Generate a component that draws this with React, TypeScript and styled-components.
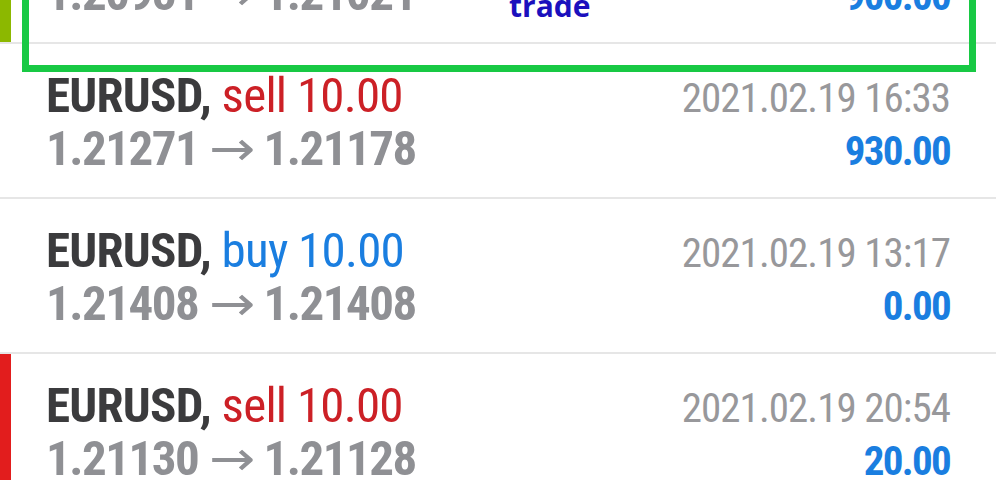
import React from 'react';
import styled, { createGlobalStyle } from 'styled-components';

const GlobalStyle = createGlobalStyle`
  html, body {
    margin: 0;
    padding: 0;
    background: #ffffff;
  }
  body {
    width: 996px;
    height: 480px;
    overflow: hidden;
    font-family: "Roboto Condensed", Roboto, "Liberation Sans", sans-serif;
  }
`;

type Deal = {
  symbol: string;
  side: 'buy' | 'sell';
  volume: string;
  open: string;
  close: string;
  time: string;
  profit: string;
  marker?: string;
};

const deals: Deal[] = [
  { symbol: 'EURUSD', side: 'buy', volume: '10.00', open: '1.20951', close: '1.21021', time: '2021.02.19 11:02', profit: '900.00', marker: '#8cb800' },
  { symbol: 'EURUSD', side: 'sell', volume: '10.00', open: '1.21271', close: '1.21178', time: '2021.02.19 16:33', profit: '930.00' },
  { symbol: 'EURUSD', side: 'buy', volume: '10.00', open: '1.21408', close: '1.21408', time: '2021.02.19 13:17', profit: '0.00' },
  { symbol: 'EURUSD', side: 'sell', volume: '10.00', open: '1.21130', close: '1.21128', time: '2021.02.19 20:54', profit: '20.00', marker: '#e21d1d' },
];

const Screen = styled.div`
  position: relative;
  width: 996px;
  height: 480px;
  overflow: hidden;
`;

const List = styled.div`
  display: flex;
  flex-direction: column;
  margin-top: -111px;
`;

const Row = styled.div<{ $marker?: string }>`
  display: grid;
  grid-template-columns: 1fr auto;
  grid-template-rows: 52px 52px;
  align-items: baseline;
  padding: 26px 46px 23px 46px;
  border-bottom: 2px solid #e6e6e6;
  box-shadow: ${p => (p.$marker ? `inset 11px 0 0 ${p.$marker}` : 'none')};
`;

const Title = styled.div`
  font-size: 49px;
  line-height: 52px;
  letter-spacing: -0.75px;
  white-space: nowrap;
`;

const Symbol = styled.span`
  font-weight: 700;
  color: #3b3b3d;
`;

const Side = styled.span<{ $side: 'buy' | 'sell' }>`
  color: ${p => (p.$side === 'sell' ? '#cc2026' : '#1a7ee0')};
`;

const Prices = styled.div`
  display: flex;
  align-items: baseline;
  font-size: 49px;
  line-height: 52px;
  font-weight: 700;
  letter-spacing: -1.5px;
  color: #8f9094;
  white-space: nowrap;
`;

const Arrow = styled.span`
  display: inline-block;
  font-family: "DejaVu Sans", sans-serif;
  font-size: 48px;
  line-height: 52px;
  font-weight: 400;
  letter-spacing: 0;
  margin: 0 11px 0 14px;
  transform: scaleX(1.15);
`;

const Time = styled.div`
  font-size: 41px;
  line-height: 44px;
  letter-spacing: -0.95px;
  color: #98989b;
  text-align: right;
  white-space: nowrap;
`;

const Profit = styled.div`
  font-size: 41px;
  line-height: 44px;
  font-weight: 700;
  letter-spacing: -1.7px;
  color: #1a7ee0;
  text-align: right;
`;

const Highlight = styled.div`
  position: absolute;
  left: 22px;
  top: -20px;
  width: 940px;
  height: 78px;
  border: 7px solid #18c944;
`;

const Label = styled.div`
  position: absolute;
  left: 509px;
  top: -13px;
  font-family: "Open Sans", "DejaVu Sans", sans-serif;
  font-size: 30px;
  font-weight: 700;
  line-height: 38px;
  color: #1b10bd;
`;

export default function App() {
  return (
    <Screen>
      <GlobalStyle />
      <List>
        {deals.map((d, i) => (
          <Row key={i} $marker={d.marker}>
            <Title>
              <Symbol>{d.symbol},</Symbol> <Side $side={d.side}>{d.side} {d.volume}</Side>
            </Title>
            <Time>{d.time}</Time>
            <Prices>
              {d.open}
              <Arrow>→</Arrow>
              {d.close}
            </Prices>
            <Profit>{d.profit}</Profit>
          </Row>
        ))}
      </List>
      <Highlight />
      <Label>trade</Label>
    </Screen>
  );
}
